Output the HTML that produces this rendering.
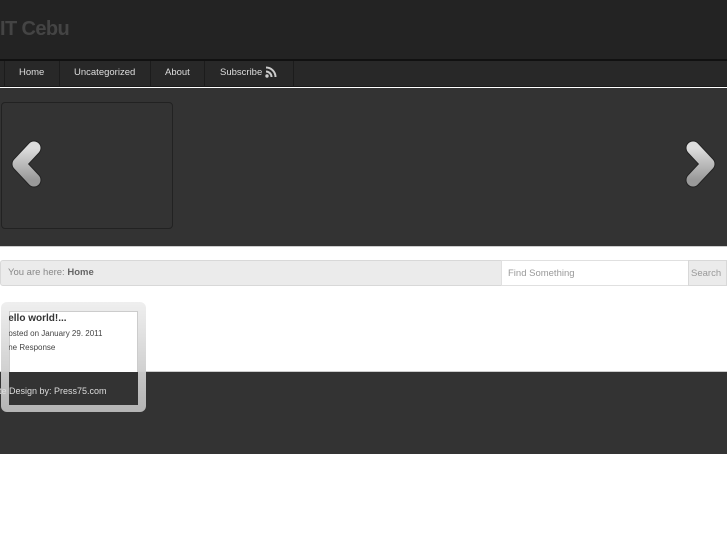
<!DOCTYPE html>
<html><head><meta charset="utf-8"><style>
*{margin:0;padding:0;box-sizing:border-box}
body{width:727px;height:545px;background:#fff;font-family:"Liberation Sans",sans-serif;position:relative;overflow:hidden}
.a{position:absolute}
</style></head><body>
<div class="a" style="left:0;top:0;width:727px;height:60px;background:#232323"></div>
<div class="a" style="left:0;top:18px;font-size:20px;font-weight:bold;color:#444;letter-spacing:-0.6px">IT Cebu</div>
<div class="a" style="left:0;top:59px;width:727px;height:2px;background:#111"></div>
<div class="a" style="left:0;top:61px;width:727px;height:26px;background:#282828;border-bottom:1px solid #1a1a1a"></div>
<div class="a" style="left:4px;top:61px;width:1px;height:26px;background:#1c1c1c"></div>
<div class="a" style="left:59px;top:61px;width:1px;height:26px;background:#1c1c1c"></div>
<div class="a" style="left:150px;top:61px;width:1px;height:26px;background:#1c1c1c"></div>
<div class="a" style="left:204px;top:61px;width:1px;height:26px;background:#1c1c1c"></div>
<div class="a" style="left:293px;top:61px;width:1px;height:26px;background:#1c1c1c"></div>
<div class="a" style="top:67px;left:19px;font-size:9.5px;color:#ddd">Home</div>
<div class="a" style="top:67px;left:74px;font-size:9.5px;color:#ddd">Uncategorized</div>
<div class="a" style="top:67px;left:165px;font-size:9.5px;color:#ddd">About</div>
<div class="a" style="top:67px;left:220px;font-size:9.5px;color:#ddd">Subscribe</div>
<svg class="a" style="left:265px;top:66px" width="12" height="12" viewBox="0 0 12 12"><circle cx="2" cy="10" r="1.7" fill="#ccc"/><path d="M1 5.5a5.5 5.5 0 0 1 5.5 5.5M1 1.5a9.5 9.5 0 0 1 9.5 9.5" stroke="#ccc" stroke-width="2" fill="none"/></svg>
<div class="a" style="left:0;top:88px;width:727px;height:158px;background:#333"></div>
<div class="a" style="left:1px;top:102px;width:172px;height:127px;border:1px solid #222;border-radius:4px"></div>
<svg class="a" style="left:8px;top:139px" width="36" height="50" viewBox="0 0 36 50"><defs><linearGradient id="g" x1="0" y1="0" x2="0" y2="1"><stop offset="0" stop-color="#ddd"/><stop offset="1" stop-color="#999"/></linearGradient></defs><path d="M26 9 L11 25 L26 41" stroke="#222" stroke-width="15" stroke-linecap="round" stroke-linejoin="round" fill="none"/><path d="M26 9 L11 25 L26 41" stroke="url(#g)" stroke-width="13" stroke-linecap="round" stroke-linejoin="round" fill="none"/></svg>
<svg class="a" style="left:683px;top:139px" width="36" height="50" viewBox="0 0 36 50"><path d="M10 9 L25 25 L10 41" stroke="#222" stroke-width="15" stroke-linecap="round" stroke-linejoin="round" fill="none"/><path d="M10 9 L25 25 L10 41" stroke="url(#g)" stroke-width="13" stroke-linecap="round" stroke-linejoin="round" fill="none"/></svg>
<div class="a" style="left:0;top:246px;width:727px;height:1px;background:#ccc"></div>
<div class="a" style="left:0;top:260px;width:502px;height:26px;background:#ebebeb;border:1px solid #d8d8d8;border-radius:3px 0 0 3px"></div>
<div class="a" style="left:8px;top:267px;font-size:9.5px;color:#888">You are here: <b style="color:#666">Home</b></div>
<div class="a" style="left:501px;top:260px;width:188px;height:26px;background:#fff;border:1px solid #e0e0e0"></div>
<div class="a" style="left:508px;top:268px;font-size:9.5px;color:#999">Find Something</div>
<div class="a" style="left:688px;top:260px;width:39px;height:26px;background:#ebebeb;border:1px solid #d8d8d8"></div>
<div class="a" style="left:691px;top:268px;font-size:9.5px;color:#999">Search</div>
<div class="a" style="left:0;top:371px;width:727px;height:83px;background:#333;border-top:1px solid #ccc"></div>
<div class="a" style="left:1px;top:302px;width:145px;height:110px;border-radius:6px;background:linear-gradient(#eee,#bbb);opacity:.95"></div>
<div class="a" style="left:9px;top:311px;width:129px;height:61px;background:#fff;border:1px solid #ccc;border-bottom:none"></div>
<div class="a" style="left:9px;top:372px;width:129px;height:33px;background:#333"></div>
<div class="a" style="left:9px;top:313px;width:129px;overflow:hidden;white-space:nowrap">
<div style="margin-left:-8px;font-size:10px;font-weight:bold;color:#333">Hello world!...</div></div>
<div class="a" style="left:9px;top:329px;width:129px;overflow:hidden;white-space:nowrap"><div style="margin-left:-6px;font-size:8px;color:#444">Posted on January 29. 2011</div></div>
<div class="a" style="left:9px;top:343px;width:129px;overflow:hidden;white-space:nowrap"><div style="margin-left:-7px;font-size:8px;color:#444">One Response</div></div>
<div class="a" style="left:0;top:386px;width:138px;overflow:hidden;white-space:nowrap"><div style="margin-left:-9px;font-size:9px;color:#ddd">Site Design by: Press75.com</div></div>
</body></html>
